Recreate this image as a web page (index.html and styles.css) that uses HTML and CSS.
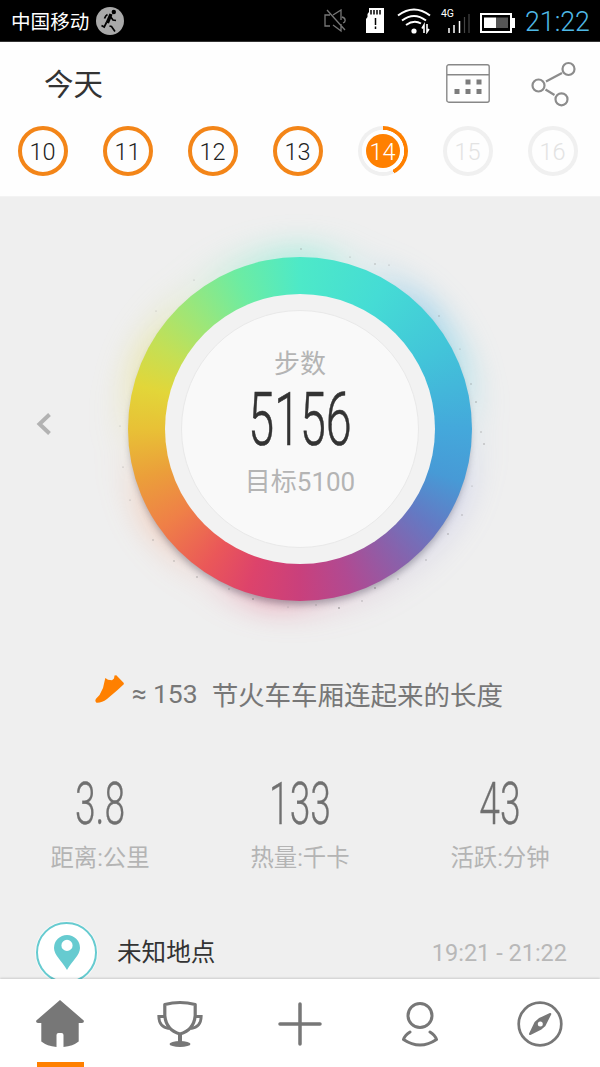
FILE: index.html
```html
<!DOCTYPE html>
<html lang="zh-CN">

<head>
    <meta charset="UTF-8">
    <title>今天</title>
    <link rel="stylesheet" href="styles.css">
</head>

<body>
    <div class="status-bar">
        <span class="carrier">中国移动</span>
        <svg class="runner" width="28" height="28" viewBox="0 0 28 28">
            <circle cx="14" cy="14" r="14" fill="#a9a9a9"/>
            <circle cx="17.800" cy="5" r="2.200"/>
            <path d="M8.500 11.500q1-3 3-4M14.500 9.500l2.500 3.500 3 .5M13.500 19l2 .5 3.500 5M10.500 15.500l-2.300 4.500-2.700-1.500" fill="none" stroke="#000" stroke-width="1.700"/>
            <path d="M13.500 6.500l3 1-3.500 9-3.500-1z"/>
        </svg>
        <div class="status-icons">
            <svg width="22" height="24" viewBox="0 0 22 24" fill="none" stroke="#777" stroke-width="1.300">
                <path d="M6 6H1v11h5M9 6l8-5v10M17 15v7l-8-6M18 8c4 1 4 5 1 6M3 1l18 20"/>
            </svg>
            <svg class="sd" width="18" height="25" viewBox="0 0 18 25">
                <path d="M3 0h15v25H0V11l1.500-2V6L3 4z" fill="#fff"/>
                <path d="M5 2v4.500M8 2v4.500M11 2v4.500M14 2v4.500M9.500 10v7M9.500 18.500v2.500" stroke="#000" stroke-width="1.500"/>
            </svg>
            <svg class="wifi" width="34" height="26" viewBox="0 0 34 26" fill="none" stroke="#fff" stroke-width="2">
                <path d="M1 7.500Q17-4.500 33 7.500M5 12.500Q17 3.500 29 12.500M9 17Q17 11.500 24 15.500"/>
                <circle cx="17" cy="23" r="2.600" fill="#fff" stroke="none"/>
                <path d="M27 25v-8l-2 3.500M30 16v8l2-3" stroke-width="1.600"/>
            </svg>
            <div class="signal">
                <span>4G</span>
                <svg width="22" height="19" viewBox="0 0 22 19">
                    <path d="M1 14v5M6 11v8M11.500 7v12" stroke="#fff" stroke-width="1.500"/>
                    <path d="M16.500 3v16M21 0v19" stroke="#444" stroke-width="1.200"/>
                </svg>
            </div>
            <svg class="battery" width="35" height="20" viewBox="0 0 35 20">
                <path d="M1 1h30v18H1z" fill="#000" stroke="#fff" stroke-width="2"/>
                <path d="M32 5h3v10h-3z" fill="#fff"/>
                <path d="M4 4.500h12v10.500H4z" fill="#fff"/>
                <path d="M16 4.500h12v10.500H16z" fill="#555"/>
            </svg>
        </div>
        <span class="clock">21:22</span>
    </div>

    <div class="header">
        <div class="title-row">
            <h1>今天</h1>
            <svg width="44" height="39" viewBox="0 0 44 39">
                <rect x=".8" y=".8" width="42.400" height="37.400" rx="2" fill="none" stroke="#888" stroke-width="1.400"/>
                <path d="M1 10.700h42" stroke="#888" stroke-width="1.400"/>
                <path d="M19.500 15.500h5v5h-5zM30.500 15.500h5v5h-5zM8.500 25h5v5h-5zM19.500 25h5v5h-5zM30.500 25h5v5h-5z" fill="#7c7c7c"/>
            </svg>
            <svg class="share" width="46" height="46" viewBox="0 0 46 46" fill="none" stroke="#8c8c8c" stroke-width="2.200">
                <circle cx="37.500" cy="8" r="6"/>
                <circle cx="7.500" cy="24.500" r="6"/>
                <circle cx="30.500" cy="38.300" r="6"/>
                <path d="M15 20.500l16-8.500M14.500 28.500l9 5.500"/>
            </svg>
        </div>
        <div class="days">
            <div class="day done">10</div>
            <div class="day done">11</div>
            <div class="day done">12</div>
            <div class="day done">13</div>
            <div class="day today"><span>14</span></div>
            <div class="day">15</div>
            <div class="day">16</div>
        </div>
    </div>

    <div class="content">
        <div class="steps">
            <svg class="prev" width="15" height="22" viewBox="0 0 15 22">
                <path d="M13.500 1.500L3.500 11l10 9.500" fill="none" stroke="#b2b2b2" stroke-width="4"/>
            </svg>
            <div class="ring">
                <div class="ring-gap">
                    <div class="dial">
                        <div class="caption">步数</div>
                        <div class="count">5156</div>
                        <div class="caption goal">目标5100</div>
                    </div>
                </div>
                <svg class="dust" width="380" height="380" viewBox="0 0 380 380" fill="#777">
                    <circle cx="191" cy="10" r=".7"/><circle cx="240" cy="18" r=".6"/><circle cx="265" cy="25" r=".7"/>
                    <circle cx="279" cy="26" r=".6"/><circle cx="329" cy="77" r=".7"/><circle cx="350" cy="110" r=".6"/>
                    <circle cx="361" cy="145" r=".7"/><circle cx="366" cy="163" r=".8"/><circle cx="371" cy="193" r=".7"/>
                    <circle cx="374" cy="205" r=".8"/><circle cx="362" cy="247" r=".6"/><circle cx="352" cy="276" r=".7"/>
                    <circle cx="338" cy="295" r=".8"/><circle cx="316" cy="321" r=".7"/><circle cx="288" cy="340" r=".7"/>
                    <circle cx="265" cy="349" r=".9"/><circle cx="252" cy="362" r=".7"/><circle cx="229" cy="369" r=".9"/>
                    <circle cx="206" cy="366" r=".7"/><circle cx="178" cy="368" r=".6"/><circle cx="143" cy="360" r=".9"/>
                    <circle cx="119" cy="350" r=".8"/><circle cx="87" cy="338" r=".8"/><circle cx="64" cy="322" r=".7"/>
                    <circle cx="43" cy="301" r=".7"/><circle cx="20" cy="261" r=".6"/><circle cx="13" cy="228" r=".6"/>
                    <circle cx="10" cy="187" r=".5"/><circle cx="46" cy="72" r=".5"/><circle cx="84" cy="41" r=".5"/>
                </svg>
            </div>
        </div>

        <div class="compare">
            <svg width="30" height="29" viewBox="0 0 30 29">
                <path d="M10.300 3L13 4.800l4 .4 2-1.700.5-3L21.300.2l7.500 7.800v1.300L22 15.500 12 24Q6.500 28.200 1.500 27.800q-2-1.800-.5-4L4.500 20 8 13z" fill="#ff8000"/>
            </svg>
            <span class="approx">≈</span>
            <span class="number">153</span>
            <span>节火车车厢连起来的长度</span>
        </div>

        <div class="stats">
            <div class="stat">
                <div class="value">3.8</div>
                <div class="label">距离:公里</div>
            </div>
            <div class="stat">
                <div class="value">133</div>
                <div class="label">热量:千卡</div>
            </div>
            <div class="stat">
                <div class="value">43</div>
                <div class="label">活跃:分钟</div>
            </div>
        </div>

        <div class="place">
            <div class="pin">
                <svg width="26" height="35" viewBox="0 0 26 35">
                    <path d="M13 0a13 13 0 0 1 13 13c0 7-8 13-13 22C8 26 0 20 0 13A13 13 0 0 1 13 0zm0 4.800a5.600 5.600 0 1 0 0 11.200 5.600 5.600 0 0 0 0-11.200z" fill="#66cbd0"/>
                </svg>
            </div>
            <span class="place-name">未知地点</span>
            <span class="place-time">19:21 - 21:22</span>
        </div>
    </div>

    <div class="tabs">
        <div class="tab active">
            <svg width="48" height="48" viewBox="0 0 48 48">
                <path d="M24 0L.3 20.500Q-.5 23 2 23h3.300v18.500Q11 46 20.500 47V35q0-2 2-2h3q2 0 2 2v12Q37 46 42.700 41.500V23H46q2.500 0 1.700-2.500z" fill="#777"/>
            </svg>
        </div>
        <div class="tab">
            <svg width="48" height="48" viewBox="0 0 48 48" fill="none" stroke="#777" stroke-width="3.200">
                <path d="M8.800 4.500q15.200-4 30.400 0v11Q38 30 24 34 10 30 8.800 15.500z" stroke-linejoin="round"/>
                <path d="M9 16.500H2.800Q3 27 13 28.500M39 16.500h6.200Q45 27 35 28.500" stroke-width="2.800"/>
                <path d="M24 34v9" stroke-width="4"/>
                <ellipse cx="24" cy="44" rx="10.500" ry="3" fill="#777" stroke="none"/>
            </svg>
        </div>
        <div class="tab">
            <svg width="48" height="48" viewBox="0 0 48 48">
                <path d="M24 4v40M4 24h40" stroke="#777" stroke-width="3.500" stroke-linecap="round"/>
            </svg>
        </div>
        <div class="tab">
            <svg width="48" height="48" viewBox="0 0 48 48" fill="none" stroke="#777" stroke-width="3">
                <circle cx="24" cy="15.500" r="12"/>
                <path d="M14 32q-5 3-6.500 7.500Q24 50.500 40.500 39.500 39 35 34 32" stroke-linecap="round" stroke-linejoin="round"/>
            </svg>
        </div>
        <div class="tab">
            <svg width="48" height="48" viewBox="0 0 48 48">
                <circle cx="24" cy="24" r="21.300" fill="none" stroke="#777" stroke-width="2.700"/>
                <path d="M34.300 14L28.500 25.500l-3.500 3L14 34l5.500-11.500 4-3.500z" fill="#777" stroke="#777" stroke-width="2" stroke-linejoin="round"/>
                <circle cx="24.300" cy="24" r="2.500" fill="#fff"/>
            </svg>
        </div>
    </div>
</body>

</html>
```
FILE: styles.css
```css
* {
    box-sizing: border-box;
}

body {
    font-family: Roboto, "Noto Sans CJK SC", sans-serif;
    background-color: #efefef;
    display: flex;
    flex-direction: column;
    height: 1067px;
    margin: 0;
    overflow: hidden;
}

svg {
    display: block;
    flex-shrink: 0;
}

.status-bar {
    background-color: #000;
    border-bottom: 1px solid #333;
    color: #fff;
    display: flex;
    align-items: center;
    height: 42px;
    flex-shrink: 0;
    padding: 0 10px 0 11px;
}

.carrier {
    font-size: 19.6px;
    margin-right: 7px;
}

.status-icons {
    display: flex;
    align-items: center;
    margin-left: auto;
}

.sd {
    margin-left: 20px;
}

.wifi {
    margin-left: 13px;
}

.signal {
    display: flex;
    flex-direction: column;
    align-items: flex-end;
    width: 29px;
    margin-left: 10px;
}

.signal span {
    font-size: 10.5px;
    line-height: 10px;
    align-self: flex-start;
    height: 5px;
}

.battery {
    margin: 4px 10px 0 10px;
}

.clock {
    color: #4fb9e6;
    font-size: 26.8px;
    font-weight: 300;
    line-height: 36px;
    padding-top: 2px;
}

.header {
    background-color: #fefefe;
    height: 155px;
    flex-shrink: 0;
    border-bottom: 1px solid #f3f3f3;
}

.title-row {
    display: flex;
    align-items: center;
    height: 83px;
    padding: 0 23px 0 44px;
}

h1 {
    color: #333;
    font-size: 29.5px;
    font-weight: 400;
    line-height: 40px;
    margin: 3px auto 0 0;
}

.share {
    margin-left: 41px;
}

.days {
    display: grid;
    grid-template-columns: repeat(7, 85px);
    justify-items: center;
}

.day {
    border: 4px solid #f0f0f0;
    border-radius: 50%;
    color: #e3e3e3;
    display: flex;
    justify-content: center;
    align-items: center;
    width: 50px;
    height: 50px;
    margin-top: 1px;
    padding-top: 1px;
    font-size: 23.5px;
    font-weight: 300;
}

.day.done {
    border-color: #f38518;
    color: #222;
}

.day.today {
    border: none;
    color: #fff;
    padding-top: 0;
    background: radial-gradient(circle, #fefefe 20.8px, transparent 21.5px),
        conic-gradient(#ff8000 0 153deg, #f0f0f0 153deg);
}

.today span {
    background-color: #ff8000;
    border-radius: 50%;
    width: 34px;
    height: 34px;
    line-height: 36px;
    text-align: center;
}

.content {
    flex: 1;
    min-height: 0;
    overflow: hidden;
}

.steps {
    display: flex;
    align-items: center;
    height: 463px;
    padding-left: 36px;
    position: relative;
    z-index: 0;
}

.prev {
    margin: -10px 77px 0 0;
}

.ring {
    position: relative;
    width: 344px;
    height: 344px;
    border-radius: 50%;
    padding: 37px;
    background: conic-gradient(#4de9c8, #45dcd5 30deg, #42c5d9 60deg,
        #44a8db 90deg, #479ad6 108deg, #6479c3 126deg, #8762ac 142deg,
        #b04a92 162deg, #c9407c 180deg, #dd436b 198deg, #ea5759 214deg,
        #ef8047 235deg, #eb9f3a 253deg, #e8c136 270deg, #e2d639 285deg,
        #c5df54 300deg, #9de678 317deg, #6ceca3 338deg, #4de9c8);
}

/* coloured halo and soft shadow behind the ring */
.ring::before,
.ring::after {
    content: "";
    position: absolute;
    z-index: -1;
    border-radius: 50%;
}

.ring::before {
    inset: -10px;
    filter: blur(15px);
    background: conic-gradient(rgba(77, 233, 200, .42), rgba(77, 210, 230, .08) 22deg,
        rgba(68, 175, 230, .42) 46deg, rgba(66, 197, 225, .35) 65deg,
        rgba(68, 168, 219, .06) 90deg, rgba(120, 130, 220, .22) 115deg,
        rgba(135, 98, 172, .12) 145deg, rgba(201, 64, 124, .15) 170deg,
        rgba(225, 67, 107, .4) 190deg, rgba(234, 87, 89, .08) 212deg,
        rgba(245, 128, 71, .3) 238deg, rgba(235, 159, 58, .04) 262deg,
        rgba(226, 214, 57, .32) 295deg, rgba(157, 230, 120, .1) 322deg,
        rgba(77, 233, 200, .42));
}

.ring::after {
    inset: 2px;
    box-shadow: 0 6px 7px rgba(60, 60, 80, .38);
}

.ring-gap {
    background-color: #f2f2f2;
    border-radius: 50%;
    height: 270px;
    padding: 16px;
}

.dial {
    background-color: #f9f9f9;
    border: 1px solid #e9e9e9;
    border-radius: 50%;
    height: 238px;
    padding-top: 33px;
    text-align: center;
}

.caption {
    color: #b4b4b4;
    font-size: 26px;
    line-height: 40px;
}

.count {
    color: #333;
    font-size: 74px;
    font-weight: 300;
    line-height: 72px;
    transform: scaleX(.63);
    -webkit-text-stroke: .6px #333;
}

.goal {
    line-height: 53px;
}

.dust {
    position: absolute;
    left: -18px;
    top: -18px;
    opacity: .6;
}

.compare {
    color: #777;
    display: flex;
    align-items: center;
    height: 66px;
    padding-left: 95px;
    font-size: 26.5px;
    white-space: nowrap;
}

.compare svg {
    margin-bottom: 8px;
}

.approx {
    margin-left: 7px;
}

.number {
    margin: 0 14px 0 6px;
}

.stats {
    display: grid;
    grid-template-columns: repeat(3, 200px);
    padding-top: 44px;
    text-align: center;
}

.value {
    color: #707070;
    font-size: 60px;
    font-weight: 300;
    line-height: 68px;
    transform: scaleX(.62);
    -webkit-text-stroke: .3px #707070;
}

.label {
    color: #b4b4b4;
    font-size: 23.4px;
    line-height: 40px;
}

.place {
    display: flex;
    align-items: center;
    padding: 44px 33px 0 36px;
}

.pin {
    background-color: #fff;
    border: 2px solid #66cbd0;
    border-radius: 50%;
    box-shadow: 0 0 0 1px #f8f8f8;
    display: flex;
    justify-content: center;
    align-items: center;
    width: 61px;
    height: 61px;
}

.place-name {
    color: #333;
    font-size: 24.6px;
    line-height: 30px;
    margin-left: 20px;
}

.place-time {
    color: #b8b8b8;
    font-size: 23.5px;
    margin-left: auto;
}

.tabs {
    background-color: #fff;
    box-shadow: 0 -1px 2px rgba(0, 0, 0, .15);
    display: grid;
    grid-template-columns: repeat(5, 120px);
    height: 88px;
    flex-shrink: 0;
    position: relative;
}

.tab {
    display: flex;
    flex-direction: column;
    align-items: center;
    padding-top: 21px;
}

.tab.active::after {
    content: "";
    background-color: #ff8000;
    width: 47px;
    height: 5px;
    margin-top: auto;
}
```
